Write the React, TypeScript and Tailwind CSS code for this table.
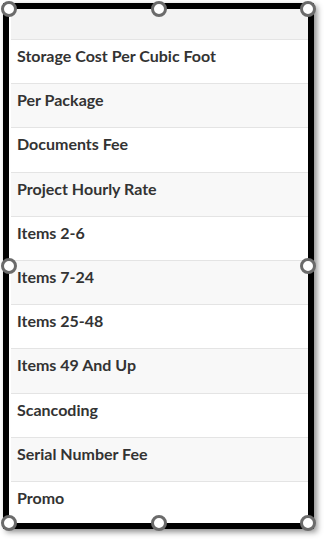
import React from 'react';

const rows = [
  'Storage Cost Per Cubic Foot',
  'Per Package',
  'Documents Fee',
  'Project Hourly Rate',
  'Items 2-6',
  'Items 7-24',
  'Items 25-48',
  'Items 49 And Up',
  'Scancoding',
  'Serial Number Fee',
  'Promo',
];

// resize handle drawn on the selection frame
const Handle: React.FC<{ className: string }> = ({ className }) => (
  <span
    className={`absolute w-4 h-4 -ml-2 -mt-2 rounded-full bg-white border-[3px] border-[#6b6b6b] ${className}`}
  />
);

const App: React.FC = () => {
  return (
    <div className="w-[324px] h-[540px] bg-white font-['Lato','Liberation_Sans',sans-serif] pt-[3px] pl-[3px]">
      <div className="relative w-[311px] h-[526px] border-[6px] border-black shadow-[3px_3px_6px_rgba(0,0,0,0.45)]">
        <div className="h-full flex flex-col overflow-hidden border-l-2 border-white">
          <div className="h-[31px] shrink-0 bg-[#f3f3f3] border-b border-[#e4e4e4]" />
          {rows.map((label, i) => (
            <div
              key={label}
              className={`h-[44.2px] shrink-0 pt-[6px] pl-[6px] text-[16px] leading-[20px] font-bold text-[#333] ${
                i % 2 === 0 ? 'bg-white' : 'bg-[#f8f8f8]'
              } ${i < rows.length - 1 ? 'border-b border-[#e4e4e4]' : ''}`}
            >
              {label}
            </div>
          ))}
        </div>
        <Handle className="left-0 top-0" />
        <Handle className="left-1/2 top-0" />
        <Handle className="left-full top-0" />
        <Handle className="left-0 top-1/2" />
        <Handle className="left-full top-1/2" />
        <Handle className="left-0 top-full" />
        <Handle className="left-1/2 top-full" />
        <Handle className="left-full top-full" />
      </div>
    </div>
  );
};

export default App;
